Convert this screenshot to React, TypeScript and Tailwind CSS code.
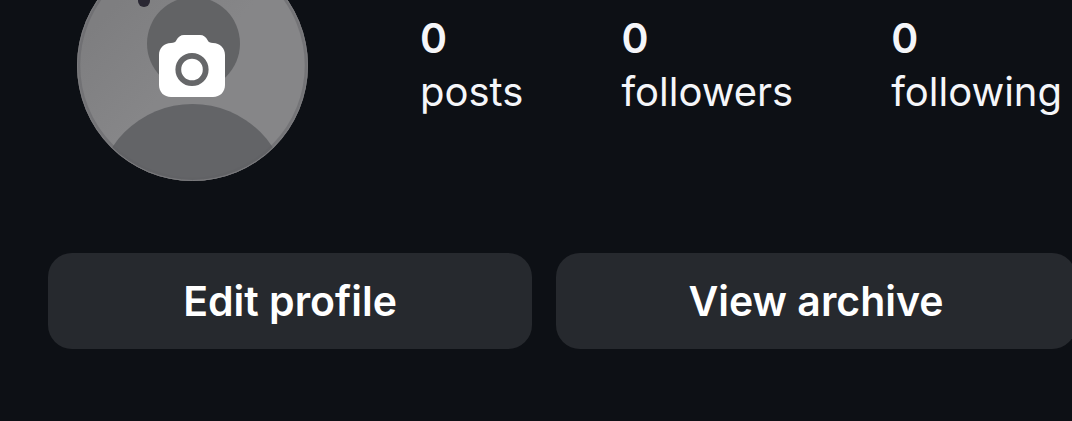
const stats = [
  { label: 'posts', value: 0 },
  { label: 'followers', value: 0 },
  { label: 'following', value: 0 },
];

const actions = ['Edit profile', 'View archive'];

/** Default profile picture with the camera overlay, cut off by the top of the page. */
function Avatar() {
  return (
    <svg viewBox="77 0 231 181" className="block h-[181px] w-[231px]" aria-hidden="true">
      <defs>
        <clipPath id="avatar-clip">
          <circle cx="192.5" cy="65.5" r="115.5" />
        </clipPath>
        <linearGradient id="avatar-fill" x1="0" y1="0" x2="1" y2="1">
          <stop offset="0.2" stopColor="#7e7e80" />
          <stop offset="0.5" stopColor="#868688" />
        </linearGradient>
      </defs>
      <g clipPath="url(#avatar-clip)">
        <rect x="77" y="-50" width="231" height="231" fill="url(#avatar-fill)" />
        <circle cx="193.5" cy="43.5" r="46.5" fill="#626365" />
        <circle cx="192.5" cy="200" r="96" fill="#636467" />
      </g>
      <circle cx="192.5" cy="65.5" r="113.5" fill="none" stroke="#5f5f63" strokeWidth="2.5" opacity="0.45" />
      <circle cx="192.5" cy="65.5" r="115" fill="none" stroke="#7a7a7d" strokeWidth="1" />
      <circle cx="144" cy="1" r="6" fill="#2a2833" />
      <path
        d="M171 43c3 0 4.500-.8 5.500-3 1.500-3 4-5 7.500-5h16c3.500 0 6 2 7.500 5 1 2.200 2.500 3 5.500 3 7 0 12 5 12 12v30c0 7-5 12-12 12h-42c-7 0-12-5-12-12V55c0-7 5-12 12-12z"
        fill="#fff"
      />
      <circle cx="192" cy="69.500" r="13.700" fill="none" stroke="#666769" strokeWidth="5.800" />
    </svg>
  );
}

export default function App() {
  return (
    <main className="min-h-screen overflow-hidden bg-[#0d1015] font-['Inter',sans-serif] leading-[54px] text-[#f5f6f9]">
      <header className="flex items-start pl-[77px]">
        <button type="button" aria-label="Change profile photo" className="shrink-0">
          <Avatar />
        </button>
        <dl className="ml-28 flex flex-1 gap-[98px] pt-[11px]">
          {stats.map((s) => (
            <div key={s.label} className="flex flex-col-reverse">
              <dt className="text-[40px]">{s.label}</dt>
              <dd className="text-[41px] font-semibold">{s.value}</dd>
            </div>
          ))}
        </dl>
      </header>

      <div className="-mr-1 mt-[72px] grid grid-cols-[484fr_520fr] gap-6 pl-12">
        {actions.map((action) => (
          <button
            key={action}
            type="button"
            className="h-24 rounded-3xl bg-[#26292e] text-[41px] font-semibold text-white"
          >
            {action}
          </button>
        ))}
      </div>
    </main>
  );
}
